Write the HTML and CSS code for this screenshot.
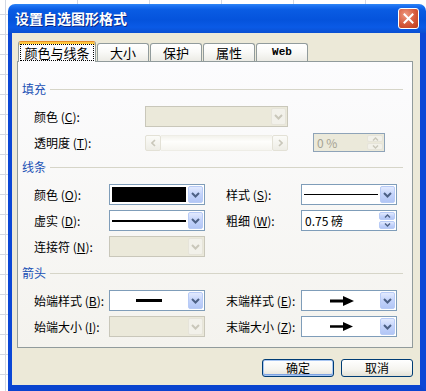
FILE: index.html
```html
<!DOCTYPE html>
<html>
<head>
<meta charset="utf-8">
<title>设置自选图形格式</title>
<link rel="stylesheet" href="styles.css">
</head>
<body>
<div class="window">
  <div class="titlebar">
    <span class="title">设置自选图形格式</span>
    <span class="close"><svg width="11" height="11" viewBox="0 0 11 11"><path d="M1.5 1.5l8 8M9.5 1.5l-8 8" stroke="#fff" stroke-width="2" stroke-linecap="square"/></svg></span>
  </div>
  <div class="client">
    <div class="tabs">
      <div class="tab tab-on"><span class="focus">颜色与线条</span></div>
      <div class="tab">大小</div>
      <div class="tab">保护</div>
      <div class="tab">属性</div>
      <div class="tab tab-web">Web</div>
    </div>
    <div class="panel">
      <div class="group group-first"><span>填充</span></div>
      <div class="grid grid-fill">
        <label>颜色 (<u>C</u>):</label>
        <div class="combo off"><div class="val"></div><span class="drop"><svg width="9" height="6" viewBox="0 0 9 6"><path d="M1 1l3.5 3.5L8 1" fill="none" stroke="currentColor" stroke-width="2"/></svg></span></div>
        <label class="col1">透明度 (<u>T</u>):</label>
        <div class="scroll">
          <span class="sbtn"><svg width="5" height="8" viewBox="0 0 5 8"><path d="M4 1L1 4l3 3" fill="none" stroke="currentColor" stroke-width="1.6"/></svg></span>
          <span class="track"></span>
          <span class="sbtn"><svg width="5" height="8" viewBox="0 0 5 8"><path d="M1 1l3 3-3 3" fill="none" stroke="currentColor" stroke-width="1.6"/></svg></span>
        </div>
        <div class="spin off col4">
          <span class="txt">0 %</span>
          <span class="spinbtn">
            <span><svg width="7" height="4" viewBox="0 0 7 4"><path d="M1 3.5l2.5-2.5 2.5 2.5" fill="none" stroke="currentColor" stroke-width="1.4"/></svg></span>
            <span><svg width="7" height="4" viewBox="0 0 7 4"><path d="M1 .5l2.5 2.5 2.5-2.5" fill="none" stroke="currentColor" stroke-width="1.4"/></svg></span>
          </span>
        </div>
      </div>

      <div class="group group-lines"><span>线条</span></div>
      <div class="grid grid-lines">
        <label>颜色 (<u>O</u>):</label>
        <div class="combo"><div class="val"><span class="swatch"></span></div><span class="drop"><svg width="9" height="6" viewBox="0 0 9 6"><path d="M1 1l3.5 3.5L8 1" fill="none" stroke="currentColor" stroke-width="2"/></svg></span></div>
        <label class="col4">样式 (<u>S</u>):</label>
        <div class="combo"><div class="val"><span class="line line-thin"></span></div><span class="drop"><svg width="9" height="6" viewBox="0 0 9 6"><path d="M1 1l3.5 3.5L8 1" fill="none" stroke="currentColor" stroke-width="2"/></svg></span></div>

        <label>虚实 (<u>D</u>):</label>
        <div class="combo"><div class="val"><span class="line line-mid"></span></div><span class="drop"><svg width="9" height="6" viewBox="0 0 9 6"><path d="M1 1l3.5 3.5L8 1" fill="none" stroke="currentColor" stroke-width="2"/></svg></span></div>
        <label class="col4">粗细 (<u>W</u>):</label>
        <div class="spin">
          <span class="txt">0.75 磅</span>
          <span class="spinbtn">
            <span><svg width="7" height="4" viewBox="0 0 7 4"><path d="M1 3.5l2.5-2.5 2.5 2.5" fill="none" stroke="currentColor" stroke-width="1.4"/></svg></span>
            <span><svg width="7" height="4" viewBox="0 0 7 4"><path d="M1 .5l2.5 2.5 2.5-2.5" fill="none" stroke="currentColor" stroke-width="1.4"/></svg></span>
          </span>
        </div>

        <label>连接符 (<u>N</u>):</label>
        <div class="combo off"><div class="val"></div><span class="drop"><svg width="9" height="6" viewBox="0 0 9 6"><path d="M1 1l3.5 3.5L8 1" fill="none" stroke="currentColor" stroke-width="2"/></svg></span></div>
      </div>

      <div class="group group-arrows"><span>箭头</span></div>
      <div class="grid grid-lines">
        <label>始端样式 (<u>B</u>):</label>
        <div class="combo"><div class="val center"><span class="line line-bar"></span></div><span class="drop"><svg width="9" height="6" viewBox="0 0 9 6"><path d="M1 1l3.5 3.5L8 1" fill="none" stroke="currentColor" stroke-width="2"/></svg></span></div>
        <label class="col4">末端样式 (<u>E</u>):</label>
        <div class="combo"><div class="val center"><svg width="24" height="10" viewBox="0 0 24 10"><path d="M0 3.5H13V0L24 5L13 10V6.5H0Z"/></svg></div><span class="drop"><svg width="9" height="6" viewBox="0 0 9 6"><path d="M1 1l3.5 3.5L8 1" fill="none" stroke="currentColor" stroke-width="2"/></svg></span></div>

        <label>始端大小 (<u>I</u>):</label>
        <div class="combo off"><div class="val"></div><span class="drop"><svg width="9" height="6" viewBox="0 0 9 6"><path d="M1 1l3.5 3.5L8 1" fill="none" stroke="currentColor" stroke-width="2"/></svg></span></div>
        <label class="col4">末端大小 (<u>Z</u>):</label>
        <div class="combo"><div class="val center"><svg width="23" height="9" viewBox="0 0 23 9"><path d="M0 3.2H13V0L23 4.5L13 9V5.8H0Z"/></svg></div><span class="drop"><svg width="9" height="6" viewBox="0 0 9 6"><path d="M1 1l3.5 3.5L8 1" fill="none" stroke="currentColor" stroke-width="2"/></svg></span></div>
      </div>
    </div>
    <div class="buttons">
      <button class="btn btn-def">确定</button>
      <button class="btn">取消</button>
    </div>
  </div>
</div>
</body>
</html>
```

FILE: styles.css
```css
html, body{
	margin:0;
	height:100%;
	overflow:hidden;
}
body{
	background-color:#fff;
	background-image:linear-gradient(to right, #d3d8e2 1px, transparent 1px), linear-gradient(to bottom, #d3d8e2 1px, transparent 1px);
	background-size:72px 20px;
	background-position:5px 14px;
	font-family:"Noto Sans CJK SC", "Liberation Sans", sans-serif;
	font-size:12px;
	line-height:14px;
	color:#000;
}
.window{
	margin:4px 0 0 8px;
	width:418px;
}
.titlebar{
	height:29px;
	border-radius:7px 7px 0 0;
	background:linear-gradient(to bottom, #2f86f5 0%, #1a6ff0 8%, #0a5ce3 20%, #0553dc 55%, #0a5ae6 80%, #0a4fd2 100%);
	display:flex;
	align-items:center;
	padding:0 5px 0 7px;
	box-sizing:border-box;
}
.title{
	flex:1;
	color:#fff;
	font-weight:bold;
	font-size:14px;
	line-height:16px;
	text-shadow:1px 1px #0a2a8a;
	margin-top:-1px;
}
.close{
	width:21px;
	height:21px;
	box-sizing:border-box;
	border:1px solid #fff;
	border-radius:3px;
	background:radial-gradient(circle at 35% 30%, #ee9a80, #d5583a 55%, #bd3a1a);
	display:flex;
	align-items:center;
	justify-content:center;
	margin-right:2px;
}
.client{
	background:#ece9d8;
	border-left:4px solid #0b47d6;
	border-right:6px solid #0b47d6;
	border-bottom:6px solid #0a44cf;
	padding:8px 7px 8px 5px;
}
.tabs{
	display:flex;
	align-items:flex-end;
	height:21px;
	margin:0 0 -1px 1px;
	position:relative;
	z-index:1;
}
.tab{
	box-sizing:border-box;
	width:52px;
	height:18px;
	margin:0 0 1px 1px;
	border:1px solid #919b9c;
	border-bottom:none;
	border-radius:3px 3px 0 0;
	background:linear-gradient(#fff, #fafaf8 45%, #ecebe5);
	display:flex;
	align-items:center;
	justify-content:center;
	font-size:13px;
	line-height:15px;
}
.tab-on{
	width:78px;
	height:21px;
	margin:0;
	border-top:1px solid #e68b2c;
	box-shadow:inset 0 2px #ffc73c;
	background:#fcfcfe;
	padding-top:1px;
}
.focus{
	border:1px dotted #000;
	padding:0 3px;
}
.tab-web{
	font-family:"Liberation Mono", monospace;
	font-weight:bold;
	font-size:11px;
}
.panel{
	box-sizing:border-box;
	width:396px;
	height:287px;
	border:1px solid #919b9c;
	background:linear-gradient(#fcfcfe, #f4f3ee);
	padding:0 0 0 4px;
}
.group{
	display:flex;
	align-items:center;
	height:14px;
	color:#2151b5;
	margin-right:9px;
}
.group::after{
	content:"";
	flex:1;
	height:1px;
	background:#d6d5c8;
	margin-left:4px;
}
.group-first{ margin-top:20px; }
.group-lines{ margin-top:8px; }
.group-arrows{ margin-top:9px; }
.grid{
	display:grid;
	margin:10px 0 0 12px;
	row-gap:6px;
}
.grid-fill{
	grid-template-columns:111px 143px 25px 72px;
	grid-template-rows:21px 19px;
}
.grid-lines{
	grid-template-columns:75px 96px 21px 75px 96px;
	grid-auto-rows:21px;
	row-gap:5px;
}
.grid-lines + .group{ }
.col1{ grid-column:1; }
.col4{ grid-column:4; }
label{
	display:flex;
	align-items:center;
	white-space:nowrap;
}
label u{
	text-decoration:underline;
	text-underline-offset:1px;
}
.combo{
	display:flex;
	box-sizing:border-box;
	border:1px solid #7f9db9;
	background:#fff;
	padding:1px;
}
.val{
	flex:1;
	display:flex;
	align-items:center;
	padding:0 1px;
}
.val.center{ justify-content:center; }
.drop{
	width:15px;
	box-sizing:border-box;
	border:1px solid #b8cbf6;
	border-radius:2px;
	background:linear-gradient(#e2eafe, #c3d3fb 50%, #b2c6f5);
	color:#4d6185;
	display:flex;
	align-items:center;
	justify-content:center;
}
.combo.off{
	border-color:#c9c7ba;
	background:#ebe9da;
}
.combo.off .drop{
	border-color:#e6e4da;
	background:#f2f1ea;
	color:#c9c7ba;
}
.swatch{
	flex:1;
	align-self:stretch;
	margin:1px 1px 1px 0;
	background:#000;
}
.line{
	flex:1;
	background:#000;
	margin-right:1px;
}
.line-thin{ height:1px; }
.line-mid{ height:2px; }
.line-bar{
	flex:none;
	width:26px;
	height:3px;
}
.scroll{
	display:flex;
	height:16px;
	align-self:center;
}
.sbtn{
	width:16px;
	box-sizing:border-box;
	border:1px solid #e3e1d6;
	border-radius:2px;
	background:linear-gradient(#fbfbf8, #eeede6);
	color:#c9c7ba;
	display:flex;
	align-items:center;
	justify-content:center;
}
.track{
	flex:1;
	background:linear-gradient(#f3f2ec, #fefefc 40%, #f6f5f0);
	border-top:1px solid #eeede6;
	border-bottom:1px solid #eeede6;
}
.spin{
	display:flex;
	box-sizing:border-box;
	border:1px solid #7f9db9;
	background:#fff;
	padding:1px;
}
.spin .txt{
	flex:1;
	display:flex;
	align-items:center;
	padding-left:2px;
}
.spinbtn{
	width:16px;
	display:flex;
	flex-direction:column;
	gap:1px;
}
.spinbtn span{
	flex:1;
	box-sizing:border-box;
	border:1px solid #b8cbf6;
	border-radius:2px;
	background:linear-gradient(#e2eafe, #c3d3fb 50%, #b2c6f5);
	color:#4d6185;
	display:flex;
	align-items:center;
	justify-content:center;
}
.spin.off{
	background:#ebe9da;
	border-color:#8ea3b8;
}
.spin.off .txt{ color:#a5a393; }
.spin.off .spinbtn span{
	border-color:#e6e4da;
	background:#f2f1ea;
	color:#c9c7ba;
}
.buttons{
	display:flex;
	justify-content:flex-end;
	gap:7px;
	margin-top:11px;
}
.btn{
	width:72px;
	height:18px;
	box-sizing:border-box;
	border:1px solid #003c74;
	border-radius:3px;
	background:linear-gradient(#fff, #f5f4ef 60%, #e3e1d6);
	font-family:"Noto Sans CJK SC", sans-serif;
	font-size:12px;
	line-height:14px;
	padding:0;
	color:#000;
}
.btn-def{
	box-shadow:inset 0 0 0 1px #a8c6f2, inset 0 -1px 0 1px #7ea3e2;
}
```
